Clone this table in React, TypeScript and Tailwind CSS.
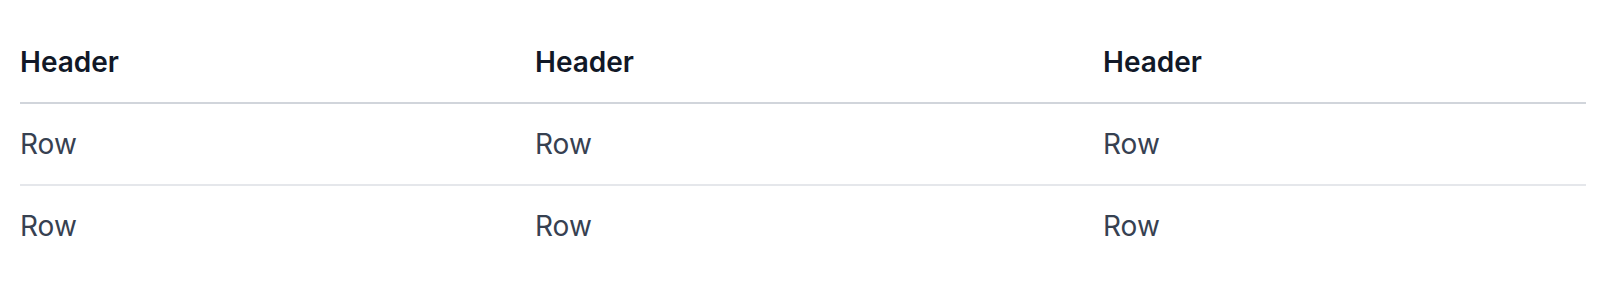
export default function App() {
  const rows = [0, 1];
  return (
    <div className="w-[1600px] h-[282px] bg-white pt-[22px] pl-[20px]">
      <table className="w-[1566px] border-collapse table-fixed font-['Inter',sans-serif] text-[28px] leading-[40px]">
        <colgroup>
          <col className="w-[515px]" />
          <col className="w-[568px]" />
          <col className="w-[483px]" />
        </colgroup>
        <thead>
          <tr className="border-b-2 border-[#d1d5db]">
            {[0, 1, 2].map((i) => (
              <th key={i} className="text-left font-semibold text-[#111827] py-[20px] px-0">
                Header
              </th>
            ))}
          </tr>
        </thead>
        <tbody>
          {rows.map((r) => (
            <tr key={r} className={r === 0 ? "border-b-2 border-[#e5e7eb]" : ""}>
              {[0, 1, 2].map((i) => (
                <td key={i} className="text-left font-normal text-[#374151] py-[20px] px-0">
                  Row
                </td>
              ))}
            </tr>
          ))}
        </tbody>
      </table>
    </div>
  );
}
